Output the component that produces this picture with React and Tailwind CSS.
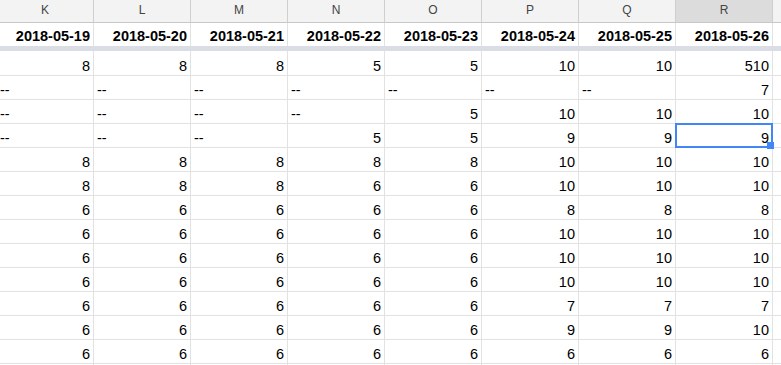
const columns = ["K", "L", "M", "N", "O", "P", "Q", "R", ""];
const dates = [
  "2018-05-19",
  "2018-05-20",
  "2018-05-21",
  "2018-05-22",
  "2018-05-23",
  "2018-05-24",
  "2018-05-25",
  "2018-05-26",
  "",
];

const rows = [
  ["8", "8", "8", "5", "5", "10", "10", "510"],
  ["--", "--", "--", "--", "--", "--", "--", "7"],
  ["--", "--", "--", "--", "5", "10", "10", "10"],
  ["--", "--", "--", "5", "5", "9", "9", "9"],
  ["8", "8", "8", "8", "8", "10", "10", "10"],
  ["8", "8", "8", "6", "6", "10", "10", "10"],
  ["6", "6", "6", "6", "6", "8", "8", "8"],
  ["6", "6", "6", "6", "6", "10", "10", "10"],
  ["6", "6", "6", "6", "6", "10", "10", "10"],
  ["6", "6", "6", "6", "6", "10", "10", "10"],
  ["6", "6", "6", "6", "6", "7", "7", "7"],
  ["6", "6", "6", "6", "6", "9", "9", "10"],
  ["6", "6", "6", "6", "6", "6", "6", "6"],
  ["", "", "", "", "", "", "", ""],
];

function Cell({ value, selected }) {
  const isText = value === "--";
  return (
    <div
      className={`relative w-[97px] shrink-0 border-r border-[#e2e2e2] flex items-end leading-[17px] ${
        isText ? "justify-start pl-[3px]" : "justify-end pr-[3px]"
      }`}
    >
      {value}
      {selected && (
        <>
          <div className="absolute -left-px -top-px w-[98px] h-[25px] border-2 border-[#4285f4] z-10" />
          <div className="absolute left-[91px] top-[18px] w-[7px] h-[7px] bg-[#4285f4] z-20" />
        </>
      )}
    </div>
  );
}

export default function App() {
  return (
    <div className="w-[781px] h-[365px] overflow-hidden bg-white text-black font-['Liberation_Sans',Arial,sans-serif]">
      <div className="-ml-[3px] w-max">
        {/* column letters */}
        <div className="flex h-[23px] border-b border-[#c8c8c8] bg-[#f3f3f3]">
          {columns.map((c, i) => (
            <div
              key={i}
              className={`w-[97px] shrink-0 border-r border-[#cfcfcf] flex items-center justify-center pb-[2px] text-[12px] text-[#444] ${
                c === "R" ? "bg-[#dcdcdc]" : ""
              }`}
            >
              {c}
            </div>
          ))}
        </div>

        {/* frozen header row */}
        <div className="flex h-[23px] text-[14.5px] font-bold">
          {dates.map((d, i) => (
            <div
              key={i}
              className="w-[97px] shrink-0 border-r border-[#e2e2e2] flex items-end justify-end pr-[3px] pb-[1px] leading-[17px]"
            >
              {d}
            </div>
          ))}
        </div>
        <div className="h-[5px] bg-[#dadde6]" />

        {rows.map((r, ri) => (
          <div
            key={ri}
            className={`flex border-b border-[#e2e2e2] text-[14.5px] ${
              ri === 0 ? "h-[25px]" : "h-[24px]"
            }`}
          >
            {r.map((v, ci) => (
              <Cell key={ci} value={v} selected={ri === 3 && ci === 7} />
            ))}
            <Cell value="" />
          </div>
        ))}
      </div>
    </div>
  );
}
